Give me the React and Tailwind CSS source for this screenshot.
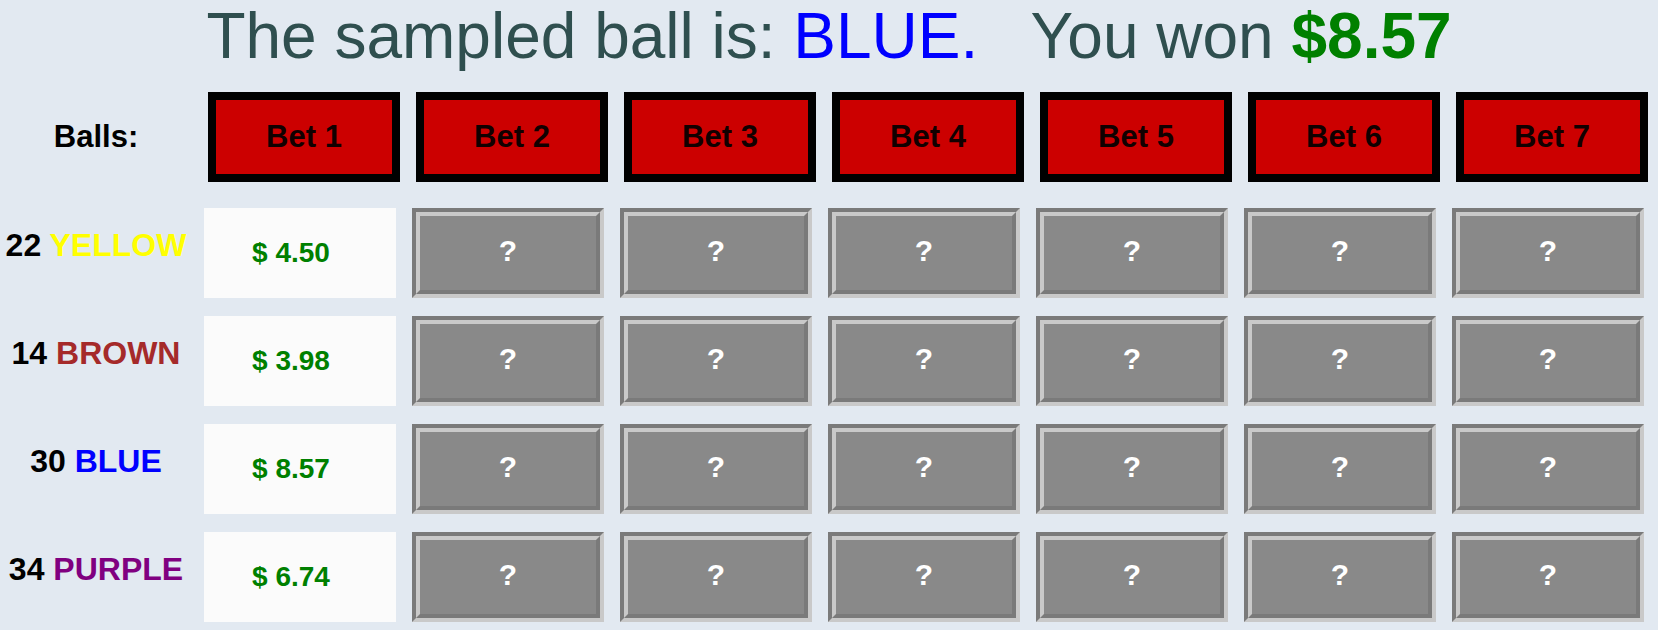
import React from 'react';

const balls = [
  { count: 22, name: 'YELLOW', color: 'text-[#ffff00]', payout: '4.50' },
  { count: 14, name: 'BROWN', color: 'text-[#a52a2a]', payout: '3.98' },
  { count: 30, name: 'BLUE', color: 'text-[#0000ff]', payout: '8.57' },
  { count: 34, name: 'PURPLE', color: 'text-[#800080]', payout: '6.74' },
];

const bets = [1, 2, 3, 4, 5, 6, 7];
const hidden = [2, 3, 4, 5, 6, 7];

const HiddenCell = () => (
  <div className="w-[192px] h-[90px] border-4 border-t-[#7a7a7a] border-l-[#7a7a7a] border-b-[#c9c9c9] border-r-[#c9c9c9]">
    <div className="w-full h-full border-4 border-t-[#c9c9c9] border-l-[#c9c9c9] border-b-[#7a7a7a] border-r-[#7a7a7a] bg-[#898989] flex items-center justify-center pb-1">
      <span className="text-white font-bold text-[30px] leading-none">?</span>
    </div>
  </div>
);

export default function App() {
  return (
    <div
      className="w-[1658px] h-[630px] bg-[#e2e9f1] overflow-hidden"
      style={{ fontFamily: '"Liberation Sans", Arial, sans-serif' }}
    >
      {/* Result line */}
      <div className="h-[72px] text-[64px] leading-[72px] text-center text-[#2f4f4f] whitespace-pre">
        The sampled ball is: <span className="text-[#0000ff]">BLUE.</span>
        {'   '}You won <span className="text-[#008000] font-bold">$8.57</span>
      </div>

      {/* Bet headers */}
      <div className="flex gap-4 mt-[20px]">
        <div className="w-[192px] h-[90px] flex items-center justify-center">
          <span className="font-bold text-[31px] text-black">Balls:</span>
        </div>
        {bets.map((b) => (
          <div
            key={b}
            className="w-[192px] h-[90px] border-8 border-black bg-[#cc0000] flex items-center justify-center"
          >
            <span className="font-bold text-[31px] text-[#110000]">Bet {b}</span>
          </div>
        ))}
      </div>

      {/* Ball rows */}
      <div className="flex flex-col gap-[18px] mt-[26px]">
        {balls.map((ball) => (
          <div key={ball.name} className="flex items-center">
            <div className="w-[192px] h-[90px] flex items-center justify-center pb-4">
              <span className="font-bold text-[32px] text-black whitespace-pre">
                {ball.count} <span className={ball.color}>{ball.name}</span>
              </span>
            </div>
            <div className="ml-3 w-[192px] h-[90px] bg-[#fbfbfb] flex items-center justify-center pr-[18px]">
              <span className="font-bold text-[28px] text-[#008000]">$ {ball.payout}</span>
            </div>
            <div className="flex gap-4 ml-4">
              {hidden.map((h) => (
                <HiddenCell key={h} />
              ))}
            </div>
          </div>
        ))}
      </div>
    </div>
  );
}
